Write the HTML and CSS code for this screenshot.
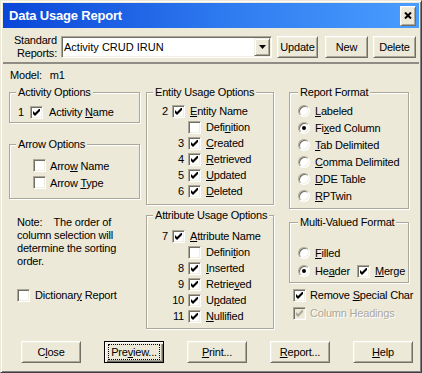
FILE: index.html
```html
<!DOCTYPE html>
<html lang="en">
<head>
  <meta charset="UTF-8" />
  <meta name="viewport" content="width=device-width, initial-scale=1.0"/>
  <title>Data Usage Report</title>
  <link rel="stylesheet" href="styles.css">
</head>
<body>
<div class="dialog">
  <div class="titlebar">
    <span class="title">Data Usage Report</span>
    <span class="close-btn"><svg width="8" height="7" viewBox="0 0 8 7"><path d="M1 0.5 7 6.5M7 0.5 1 6.5" stroke="#000" stroke-width="2"/></svg></span>
  </div>

  <div class="toolbar">
    <div class="std-label">Standard<br>Reports:</div>
    <div class="combo">
      <span class="combo-text">Activity CRUD IRUN</span>
      <span class="combo-arrow"><svg width="7" height="4" viewBox="0 0 7 4"><path d="M0 0h7L3.5 4z"/></svg></span>
    </div>
    <button class="btn btn-update">Update</button>
    <button class="btn btn-new">New</button>
    <button class="btn btn-delete">Delete</button>
  </div>
  <div class="sep"></div>

  <div class="model"><span>Model:</span><span class="model-name">m1</span></div>

  <div class="main">
    <div class="col col-left">
      <div class="group act">
        <div class="group-title">Activity Options</div>
        <div class="opts">
          <div class="row"><span class="num">1</span><span class="chk"><svg width="7" height="7" viewBox="0 0 7 7"><path d="M0 2 2 4 6 0h1v2L2 7 0 5z"/></svg></span><span class="lbl">Activity <u>N</u>ame</span></div>
        </div>
      </div>

      <div class="group arrow">
        <div class="group-title">Arrow Options</div>
        <div class="opts">
          <div class="row"><span class="chk"></span><span class="lbl">Arro<u>w</u> Name</span></div>
          <div class="row"><span class="chk"></span><span class="lbl">Arrow <u>T</u>ype</span></div>
        </div>
      </div>

      <p class="note">Note:&nbsp;&nbsp;&nbsp; The order of<br>column selection will<br>determine the sorting<br>order.</p>

      <div class="row dict"><span class="chk"></span><span class="lbl">Dictionar<u>y</u> Report</span></div>
    </div>

    <div class="col col-mid">
      <div class="group entity">
        <div class="group-title">Entity Usage Options</div>
        <div class="opts">
          <div class="row"><span class="num">2</span><span class="chk"><svg width="7" height="7" viewBox="0 0 7 7"><path d="M0 2 2 4 6 0h1v2L2 7 0 5z"/></svg></span><span class="lbl"><u>E</u>ntity Name</span></div>
          <div class="row"><span class="num wide"></span><span class="chk"></span><span class="lbl">Defi<u>n</u>ition</span></div>
          <div class="row"><span class="num wide">3</span><span class="chk"><svg width="7" height="7" viewBox="0 0 7 7"><path d="M0 2 2 4 6 0h1v2L2 7 0 5z"/></svg></span><span class="lbl"><u>C</u>reated</span></div>
          <div class="row"><span class="num wide">4</span><span class="chk"><svg width="7" height="7" viewBox="0 0 7 7"><path d="M0 2 2 4 6 0h1v2L2 7 0 5z"/></svg></span><span class="lbl"><u>R</u>etrieved</span></div>
          <div class="row"><span class="num wide">5</span><span class="chk"><svg width="7" height="7" viewBox="0 0 7 7"><path d="M0 2 2 4 6 0h1v2L2 7 0 5z"/></svg></span><span class="lbl"><u>U</u>pdated</span></div>
          <div class="row"><span class="num wide">6</span><span class="chk"><svg width="7" height="7" viewBox="0 0 7 7"><path d="M0 2 2 4 6 0h1v2L2 7 0 5z"/></svg></span><span class="lbl"><u>D</u>eleted</span></div>
        </div>
      </div>

      <div class="group attr">
        <div class="group-title">Attribute Usage Options</div>
        <div class="opts">
          <div class="row"><span class="num">7</span><span class="chk"><svg width="7" height="7" viewBox="0 0 7 7"><path d="M0 2 2 4 6 0h1v2L2 7 0 5z"/></svg></span><span class="lbl"><u>A</u>ttribute Name</span></div>
          <div class="row"><span class="num wide"></span><span class="chk"></span><span class="lbl">Defini<u>t</u>ion</span></div>
          <div class="row"><span class="num wide">8</span><span class="chk"><svg width="7" height="7" viewBox="0 0 7 7"><path d="M0 2 2 4 6 0h1v2L2 7 0 5z"/></svg></span><span class="lbl"><u>I</u>nserted</span></div>
          <div class="row"><span class="num wide">9</span><span class="chk"><svg width="7" height="7" viewBox="0 0 7 7"><path d="M0 2 2 4 6 0h1v2L2 7 0 5z"/></svg></span><span class="lbl">Retrie<u>v</u>ed</span></div>
          <div class="row"><span class="num wide">10</span><span class="chk"><svg width="7" height="7" viewBox="0 0 7 7"><path d="M0 2 2 4 6 0h1v2L2 7 0 5z"/></svg></span><span class="lbl">U<u>p</u>dated</span></div>
          <div class="row"><span class="num wide">11</span><span class="chk"><svg width="7" height="7" viewBox="0 0 7 7"><path d="M0 2 2 4 6 0h1v2L2 7 0 5z"/></svg></span><span class="lbl"><u>N</u>ullified</span></div>
        </div>
      </div>
    </div>

    <div class="col col-right">
      <div class="group fmt">
        <div class="group-title">Report Format</div>
        <div class="opts">
          <div class="row"><span class="radio"></span><span class="lbl"><u>L</u>abeled</span></div>
          <div class="row"><span class="radio on"></span><span class="lbl">Fi<u>x</u>ed Column</span></div>
          <div class="row"><span class="radio"></span><span class="lbl"><u>T</u>ab Delimited</span></div>
          <div class="row"><span class="radio"></span><span class="lbl"><u>C</u>omma Delimited</span></div>
          <div class="row"><span class="radio"></span><span class="lbl"><u>D</u>DE Table</span></div>
          <div class="row"><span class="radio"></span><span class="lbl"><u>R</u>PTwin</span></div>
        </div>
      </div>

      <div class="group multi">
        <div class="group-title">Multi-Valued Format</div>
        <div class="opts">
          <div class="row"><span class="radio"></span><span class="lbl"><u>F</u>illed</span></div>
          <div class="row"><span class="radio on"></span><span class="lbl">He<u>a</u>der</span><span class="chk merge"><svg width="7" height="7" viewBox="0 0 7 7"><path d="M0 2 2 4 6 0h1v2L2 7 0 5z"/></svg></span><span class="lbl"><u>M</u>erge</span></div>
        </div>
      </div>

      <div class="extras">
        <div class="row"><span class="chk"><svg width="7" height="7" viewBox="0 0 7 7"><path d="M0 2 2 4 6 0h1v2L2 7 0 5z"/></svg></span><span class="lbl">Remove <u>S</u>pecial Char</span></div>
        <div class="row disabled"><span class="chk"><svg width="7" height="7" viewBox="0 0 7 7"><path d="M0 2 2 4 6 0h1v2L2 7 0 5z"/></svg></span><span class="lbl">Column Headings</span></div>
      </div>
    </div>
  </div>

  <div class="footer">
    <button class="btn">C<u>l</u>ose</button>
    <button class="btn btn-default"><span class="focus">Pre<u>v</u>iew...</span></button>
    <button class="btn"><u>P</u>rint...</button>
    <button class="btn btn-report"><u>R</u>eport...</button>
    <button class="btn btn-help"><u>H</u>elp</button>
  </div>
</div>
</body>
</html>
```

FILE: styles.css
```css
body { margin: 0; font-family: "Liberation Sans", Arial, sans-serif; font-size: 11px; letter-spacing: -0.2px; color: #000; }
u { text-underline-offset: 1px; }

.dialog { width: 422px; height: 373px; box-sizing: border-box; padding: 2px; background: #ece9d8; border: 1px solid; border-color: #ece9d8 #404040 #404040 #ece9d8; box-shadow: inset 1px 1px #fff, inset -1px -1px #808080; }

/* title bar */
.titlebar { height: 25px; display: flex; align-items: center; padding: 0 3px; background: linear-gradient(to right, #0a46d8, #2f7cf0 55%, #4a9dff); }
.title { flex: 1; margin-left: 3px; color: #fff; font-weight: bold; font-size: 13px; }
.close-btn { width: 16px; height: 20px; box-sizing: border-box; display: flex; align-items: center; justify-content: center; background: #ece9d8; border: 1px solid; border-color: #fff #716f64 #716f64 #fff; box-shadow: inset 1px 1px #f1efe2, inset -1px -1px #aca899; }
.close-btn svg { display: block; }

/* buttons */
.btn { height: 22px; box-sizing: border-box; padding: 0; margin: 0; font: inherit; letter-spacing: inherit; color: #000; background: #ece9d8; border: 1px solid; border-color: #fff #716f64 #716f64 #fff; box-shadow: inset 1px 1px #f1efe2, inset -1px -1px #aca899; display: inline-flex; align-items: center; justify-content: center; }
.btn-default { border-color: #000; box-shadow: inset 1px 1px #fff, inset 2px 2px #f1efe2, inset -1px -1px #716f64, inset -2px -2px #aca899; }
.focus { flex: 1; align-self: stretch; margin: 2px 3px; border: 1px dotted #000; display: flex; align-items: center; justify-content: center; }

/* top row */
.toolbar { display: flex; align-items: center; padding: 6px 0 2px 10px; }
.std-label { width: 44px; text-align: right; line-height: 13px; }
.combo { width: 211px; height: 22px; box-sizing: border-box; margin-left: 4px; display: flex; align-items: center; background: #fff; border: 1px solid; border-color: #aca899 #fff #fff #aca899; box-shadow: inset 1px 1px #716f64, inset -1px -1px #f1efe2; padding: 1px 1px 1px 2px; }
.combo-text { flex: 1; letter-spacing: 0; }
.combo-arrow { width: 16px; height: 18px; box-sizing: border-box; display: flex; align-items: center; justify-content: center; background: #ece9d8; border: 1px solid; border-color: #f1efe2 #716f64 #716f64 #f1efe2; box-shadow: inset 1px 1px #fff, inset -1px -1px #aca899; }
.combo-arrow svg { display: block; }
.btn-update { width: 41px; margin-left: 5px; }
.btn-new { width: 43px; margin-left: 7px; }
.btn-delete { width: 43px; margin-left: 5px; }

.sep { height: 2px; background: #8e8c84; }

.model { margin-top: 5px; padding-left: 7px; line-height: 13px; }
.model-name { margin-left: 8px; }

/* option columns */
.main { display: flex; align-items: flex-start; margin-top: 10px; padding-left: 6px; }
.col-left { width: 131px; }
.col-mid { width: 128px; margin-left: 6px; }
.col-right { width: 120px; margin-left: 15px; }

.group { box-sizing: border-box; border: 1px solid #aca899; box-shadow: 1px 1px 0 #fff, inset 1px 1px 0 #fff; }
.group-title { width: fit-content; margin: -7px 0 0 6px; padding: 0 2px; line-height: 13px; background: #ece9d8; white-space: nowrap; }

.row { display: flex; align-items: center; height: 16px; white-space: nowrap; }
.lbl { margin-left: 5px; }
.num { flex: none; width: 21px; margin-right: 4px; text-align: right; }
.num.wide { width: 37px; }

.chk { flex: none; width: 13px; height: 13px; box-sizing: border-box; display: flex; align-items: center; justify-content: center; background: #fff; border: 1px solid; border-color: #aca899 #fff #fff #aca899; box-shadow: inset 1px 1px #716f64, inset -1px -1px #f1efe2; }
.chk svg { display: block; fill: #000; }

.radio { flex: none; width: 12px; height: 12px; box-sizing: border-box; border-radius: 50%; display: flex; align-items: center; justify-content: center; background: #fff; border: 1px solid; border-color: #aca899 #fff #fff #aca899; box-shadow: inset 1px 1px #716f64, inset -1px -1px #f1efe2; }
.radio.on::before { content: ""; width: 4px; height: 4px; border-radius: 50%; background: #000; }

.act { height: 31px; }
.act .opts { padding-top: 5px; }
.act .num { width: 14px; margin-right: 6px; }
.act .lbl { margin-left: 6px; }

.arrow { height: 55px; margin-top: 21px; }
.arrow .opts { padding: 6px 0 0 23px; }
.arrow .row { height: 17px; }
.arrow .lbl { margin-left: 4px; }

.note { margin: 17px 0 0; padding-left: 8px; line-height: 13px; }
.dict { margin-top: 19px; padding-left: 8px; }

.entity { height: 113px; }
.entity .opts { padding-top: 4px; }
.attr { height: 114px; margin-top: 10px; }
.attr .opts { padding-top: 6px; }

.fmt { height: 117px; }
.fmt .group-title, .multi .group-title { margin-left: 8px; }
.fmt .opts { padding: 3px 0 0 8px; }
.fmt .row { height: 17px; }
.multi { height: 61px; margin-top: 13px; }
.multi .opts { padding: 15px 0 0 8px; }
.multi .row { height: 18px; }
.chk.merge { margin-left: 7px; }

.extras { margin-top: 3px; padding-left: 4px; }
.extras .row { height: 18px; }
.extras .lbl { margin-left: 4px; }
.disabled .chk { background: #ece9d8; }
.disabled .chk svg { fill: #aca899; }
.disabled .lbl { color: #aca899; text-shadow: 1px 1px 0 #fff; }

/* bottom buttons */
.footer { display: flex; margin-top: 12px; padding-left: 18px; }
.footer .btn { width: 60px; }
.footer .btn + .btn { margin-left: 23px; }
.footer .btn-report, .footer .btn-help { margin-left: 22px; }
```
